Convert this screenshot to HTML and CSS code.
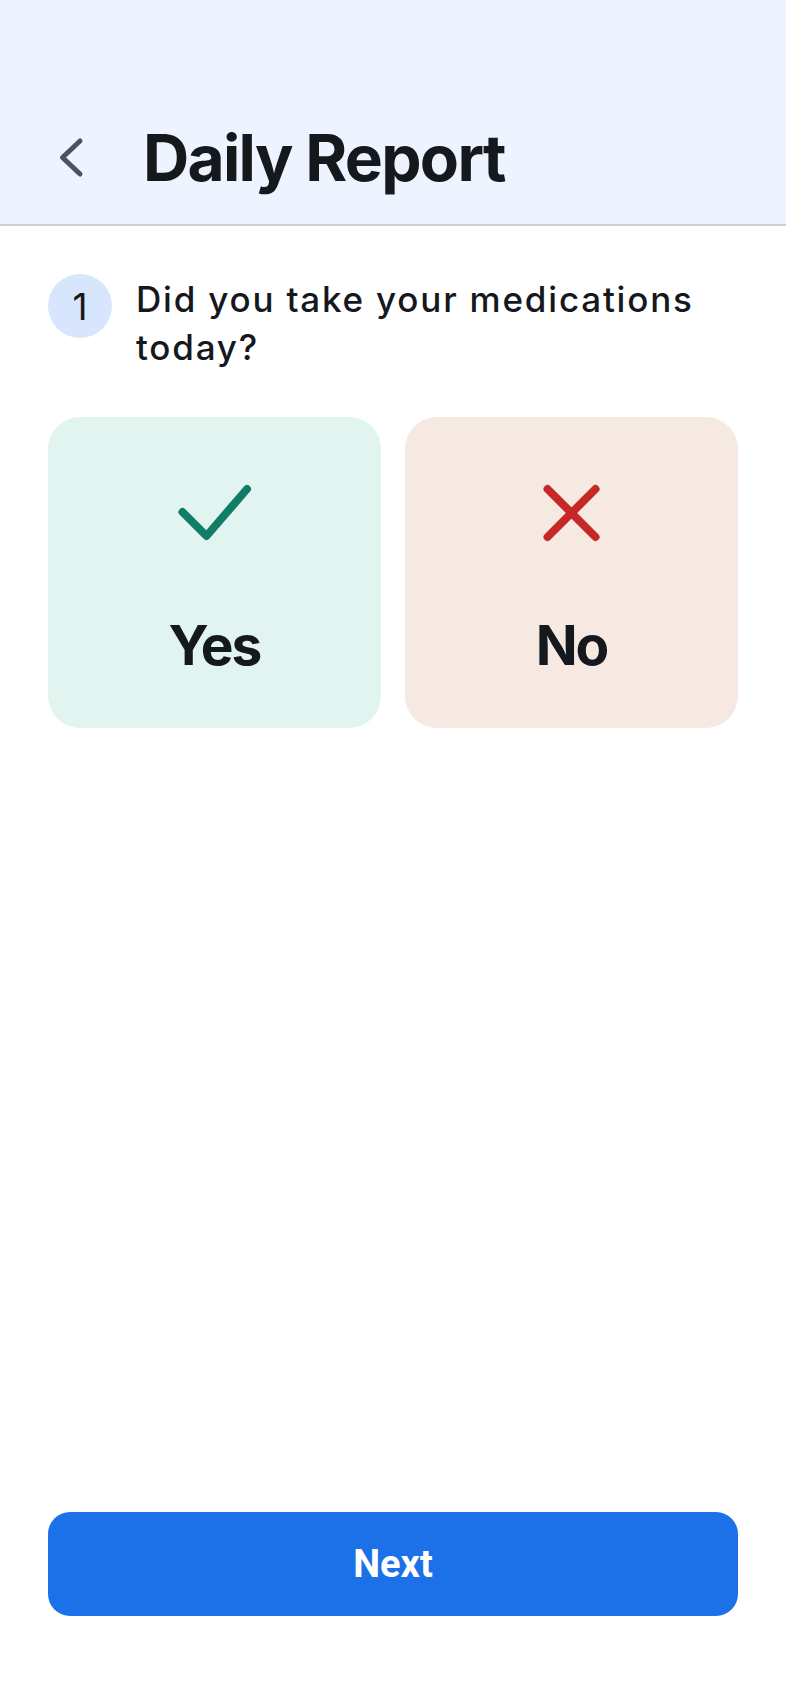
FILE: index.html
```html
<!DOCTYPE html>
<html lang="en">
<head>
  <meta charset="UTF-8">
  <meta name="viewport" content="width=device-width, initial-scale=1.0">
  <title>Daily Report</title>
  <link rel="stylesheet" href="styles.css">
</head>
<body>

<div class="screen">
  <div class="top-bar">
    <button class="back-btn" aria-label="Back">
      <svg width="48" height="48" viewBox="0 0 48 48">
        <polyline points="32,7 14.5,23.5 32,40" fill="none" stroke="#4b5263" stroke-width="5" stroke-linecap="round" stroke-linejoin="round"/>
      </svg>
    </button>
    <h1>Daily Report</h1>
  </div>

  <div class="content">
    <div class="question">
      <div class="q-num">1</div>
      <p class="q-text">Did you take your medications today?</p>
    </div>

    <div class="answers">
      <button class="answer yes">
        <svg width="80" height="64" viewBox="0 0 80 64">
          <polyline points="7.5,31 31.5,55 72,8" fill="none" stroke="#127d67" stroke-width="8" stroke-linecap="round" stroke-linejoin="round"/>
        </svg>
        <span>Yes</span>
      </button>
      <button class="answer no">
        <svg width="80" height="64" viewBox="0 0 80 64">
          <line x1="15.5" y1="8" x2="63.5" y2="56" stroke="#c62828" stroke-width="8" stroke-linecap="round"/>
          <line x1="63.5" y1="8" x2="15.5" y2="56" stroke="#c62828" stroke-width="8" stroke-linecap="round"/>
        </svg>
        <span>No</span>
      </button>
    </div>
  </div>

  <div class="footer">
    <button class="next-btn">Next</button>
  </div>
</div>

</body>
</html>
```

FILE: styles.css
```css
body {
  margin: 0;
  font-family: 'Inter', 'Liberation Sans', sans-serif;
  color: #15181d;
  background: #fff;
}

.screen {
  min-height: 100vh;
  display: flex;
  flex-direction: column;
}

.top-bar {
  height: 226px;
  box-sizing: border-box;
  padding: 126px 48px 34px 48px;
  background: #edf4ff;
  border-bottom: 2px solid #cbd0d7;
  display: flex;
  align-items: center;
}

.back-btn {
  border: none;
  background: none;
  padding: 0;
  width: 48px;
  height: 48px;
  margin-right: 47px;
  cursor: pointer;
}

.back-btn svg {
  display: block;
}

h1 {
  margin: 0;
  font-size: 64px;
  font-weight: 700;
  letter-spacing: -1.7px;
  line-height: 64px;
}

.content {
  flex: 1;
  padding: 48px 48px 0 48px;
}

.question {
  display: flex;
  align-items: flex-start;
  gap: 24px;
}

.q-num {
  flex: none;
  width: 64px;
  height: 64px;
  border-radius: 50%;
  background: #d7e6fc;
  display: flex;
  align-items: center;
  justify-content: center;
  font-size: 37px;
  font-weight: 400;
}

.q-text {
  margin: 1px 0 0 0;
  font-size: 35px;
  line-height: 48px;
  font-weight: 500;
  letter-spacing: 1.8px;
}

.answers {
  display: flex;
  gap: 24px;
  margin-top: 46px;
}

.answer {
  flex: 1;
  height: 311px;
  border: none;
  border-radius: 32px;
  padding: 64px 0 0 0;
  display: flex;
  flex-direction: column;
  align-items: center;
  font-family: inherit;
  color: #15181d;
  cursor: pointer;
}

.answer svg {
  display: block;
}

.answer span {
  margin-top: 73px;
  font-size: 55px;
  line-height: 55px;
  font-weight: 700;
  letter-spacing: -2px;
}

.answer.yes {
  background: #e1f4ef;
}

.answer.no {
  background: #f6e9e2;
}

.footer {
  padding: 0 48px 88px 48px;
}

.next-btn {
  width: 100%;
  height: 104px;
  border: none;
  border-radius: 22px;
  background: #1c70e8;
  color: #fff;
  font-family: 'Roboto', 'Liberation Sans', sans-serif;
  font-size: 38px;
  font-weight: 700;
  cursor: pointer;
}
```
